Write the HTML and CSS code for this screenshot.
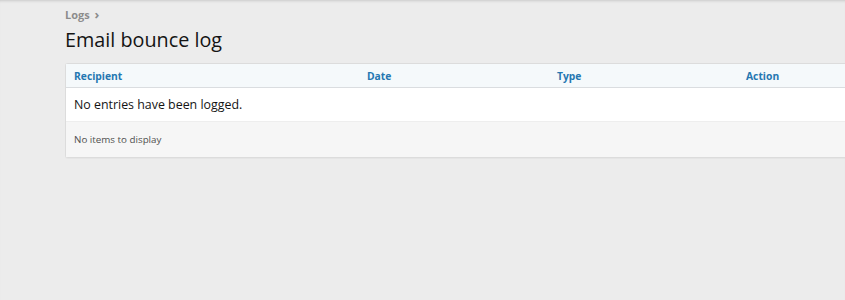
FILE: index.html
```html
<!DOCTYPE html>
<html lang="en">
<head>
    <meta charset="UTF-8">
    <title>Email bounce log</title>
    <link rel="stylesheet" href="styles.css">
</head>
<body>
    <div class="page">
        <div class="breadcrumb">Logs <span class="chev">&#8250;</span></div>
        <h1>Email bounce log</h1>

        <div class="block">
            <div class="table-head">
                <div>Recipient</div>
                <div>Date</div>
                <div>Type</div>
                <div>Action</div>
            </div>
            <div class="table-empty">No entries have been logged.</div>
            <div class="block-footer">No items to display</div>
        </div>
    </div>
</body>
</html>
```

FILE: styles.css
```css
html, body {
    margin: 0;
    padding: 0;
    overflow: hidden;
}
body {
    font-family: 'Open Sans', 'Noto Sans', sans-serif;
    background-color: #ececec;
    color: #141414;
    height: 300px;
    box-shadow: inset 0 3px 3px -2px rgba(0,0,0,0.15);
}
.page {
    padding: 5px 0 0 65px;
}
.breadcrumb {
    font-size: 11px;
    font-weight: bold;
    color: #8c8c8c;
    line-height: 18px;
}
.chev {
    font-size: 13px;
    margin-left: 2px;
}
h1 {
    font-size: 19.8px;
    font-weight: normal;
    margin: 3px 0 0 0;
    line-height: 26px;
}
.block {
    margin-top: 10px;
    width: 820px;
    background: #fff;
    border: 1px solid #dcdcdc;
    border-right: none;
    border-radius: 3px 0 0 3px;
    box-shadow: 0 1px 1px rgba(0,0,0,0.03);
}
.table-head {
    display: grid;
    grid-template-columns: 293px 190px 189px 1fr;
    background: #f5f9fb;
    border-bottom: 1px solid #dadde0;
    height: 23px;
    align-items: center;
    font-size: 10.3px;
    font-weight: bold;
    color: #2577b1;
}
.table-head div {
    padding-left: 8px;
}
.table-empty {
    padding: 0 8px;
    line-height: 33px;
    font-size: 12.4px;
    color: #141414;
    border-bottom: 1px solid #eeeeee;
}
.block-footer {
    background: #f6f6f6;
    padding: 0 8px;
    line-height: 35px;
    font-size: 9.8px;
    color: #505050;
}
```
